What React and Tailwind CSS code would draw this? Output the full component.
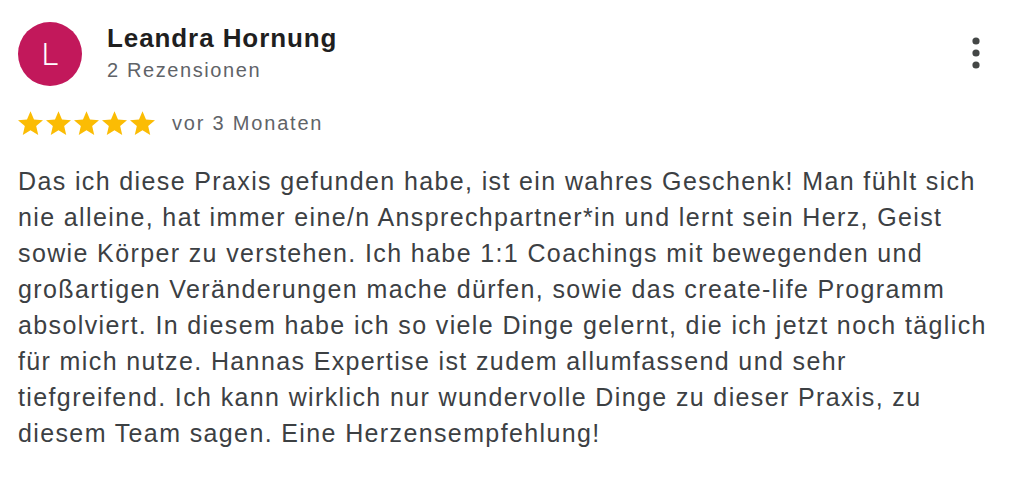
import React from 'react';

function Star() {
    return (
        <svg width="25" height="24" viewBox="2 2 20 19" className="block">
            <path fill="#fbbc04" d="M12 17.27L18.18 21l-1.64-7.03L22 9.24l-7.19-.61L12 2 9.19 8.63 2 9.24l5.46 4.73L5.82 21z" />
        </svg>
    );
}

export default function App() {
    return (
        <div className="min-h-screen bg-white font-['Liberation_Sans',Arial,sans-serif] pl-[18px] pr-[36px] pt-[22px]">
            {/* Header */}
            <div className="flex items-start">
                <div className="w-16 h-16 rounded-full bg-[#c2185b] flex items-center justify-center shrink-0">
                    <span className="text-white text-[32px] leading-none font-['Roboto',sans-serif] font-light">L</span>
                </div>
                <div className="ml-[25px] flex-1">
                    <div className="mt-[3px] text-[26px] leading-[26px] font-bold text-[#1f1f1f] tracking-[0.035em]">
                        Leandra Hornung
                    </div>
                    <div className="mt-[9px] text-[20px] leading-[20px] text-[#5f6368] tracking-[0.08em]">
                        2 Rezensionen
                    </div>
                </div>
                <button className="mt-[14px] w-7 h-12 flex items-start justify-center">
                    <svg width="10" height="34" viewBox="0 0 10 34">
                        <circle cx="5" cy="5" r="3.6" fill="#444746" />
                        <circle cx="5" cy="17" r="3.6" fill="#444746" />
                        <circle cx="5" cy="29" r="3.6" fill="#444746" />
                    </svg>
                </button>
            </div>

            {/* Rating */}
            <div className="mt-[25px] flex items-center">
                <div className="flex gap-[3px]">
                    <Star />
                    <Star />
                    <Star />
                    <Star />
                    <Star />
                </div>
                <span className="ml-[17px] text-[20px] leading-[20px] text-[#5f6368] tracking-[0.09em]">vor 3 Monaten</span>
            </div>

            {/* Review text */}
            <p className="mt-[28px] text-[25px] leading-[36px] text-[#3c4043] tracking-[0.055em]">
                Das ich diese Praxis gefunden habe, ist ein wahres Geschenk! Man fühlt sich nie alleine, hat immer eine/n Ansprechpartner*in und lernt sein Herz, Geist sowie Körper zu verstehen. Ich habe 1:1 Coachings mit bewegenden und großartigen Veränderungen mache dürfen, sowie das create-life Programm absolviert. In diesem habe ich so viele Dinge gelernt, die ich jetzt noch täglich für mich nutze. Hannas Expertise ist zudem allumfassend und sehr tiefgreifend. Ich kann wirklich nur wundervolle Dinge zu dieser Praxis, zu diesem Team sagen. Eine Herzensempfehlung!
            </p>
        </div>
    );
}
